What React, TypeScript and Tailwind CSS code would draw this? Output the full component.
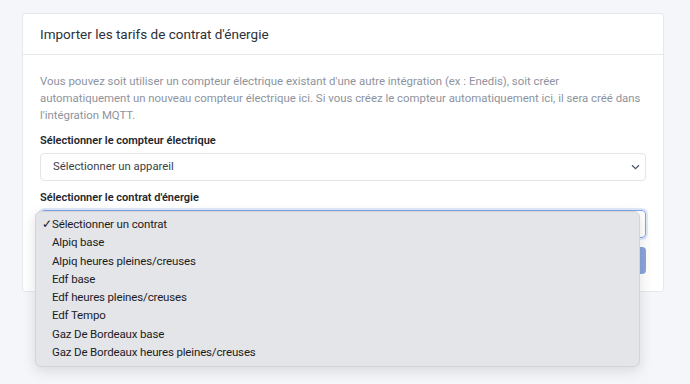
import React from 'react';

const contracts = [
  'Sélectionner un contrat',
  'Alpiq base',
  'Alpiq heures pleines/creuses',
  'Edf base',
  'Edf heures pleines/creuses',
  'Edf Tempo',
  'Gaz De Bordeaux base',
  'Gaz De Bordeaux heures pleines/creuses',
];

const Chevron: React.FC = () => (
  <svg width="9" height="6" viewBox="0 0 9 6" className="text-gray-600">
    <path d="M1 1.2 L4.5 4.6 L8 1.2" fill="none" stroke="currentColor" strokeWidth="1.2" />
  </svg>
);

const App: React.FC = () => {
  return (
    <div
      className="relative h-[384px] w-[690px] overflow-hidden bg-[#f5f6f9] pt-[13px] pl-[22px]"
      style={{ fontFamily: 'Roboto, "Liberation Sans", sans-serif' }}
    >
      <div className="w-[642px] rounded-[3px] border border-[#e6e8ec] bg-white">
        <div className="flex h-[41px] items-center border-b border-[#e6e8ec] px-[17px]">
          <h1 className="text-[13.5px] font-normal text-[#2d3139]">Importer les tarifs de contrat d'énergie</h1>
        </div>
        <div className="px-[17px] pt-[18px] pb-[17px]">
          <p className="text-[11.4px] leading-[17px] text-[#8e939e]">
            <span className="block whitespace-nowrap">
              Vous pouvez soit utiliser un compteur électrique existant d'une autre intégration (ex : Enedis), soit créer
            </span>
            <span className="block whitespace-nowrap">
              automatiquement un nouveau compteur électrique ici. Si vous créez le compteur automatiquement ici, il sera créé dans
            </span>
            <span className="block whitespace-nowrap">l'intégration MQTT.</span>
          </p>
          <label className="mt-[9px] block text-[11px] leading-[16px] font-semibold text-[#23262d]">
            Sélectionner le compteur électrique
          </label>
          <div className="mt-[4px] flex h-[28px] items-center justify-between rounded-[4px] border border-[#e3e5ea] pr-[5px] pl-[12px]">
            <span className="text-[11.3px] text-[#3a3f48]">Sélectionner un appareil</span>
            <Chevron />
          </div>
          <label className="mt-[9px] block text-[11px] leading-[16px] font-semibold text-[#23262d]">
            Sélectionner le contrat d'énergie
          </label>
          <div className="mt-[4px] flex h-[28px] items-center justify-end rounded-[4px] border border-[#7ea6e6] pr-[5px] shadow-[0_0_0_2px_rgba(126,166,230,0.25)]">
            <Chevron />
          </div>
          <div className="mt-[9px] flex justify-end">
            <div className="h-[27px] w-[98px] rounded-[4px] bg-[#8aa5db]" />
          </div>
        </div>
      </div>

      <ul className="absolute top-[211px] left-[35px] w-[605px] rounded-[6px] border border-[#d3d4d8] bg-[#e4e5e9] pt-[3px] pb-[5px] shadow-[0_4px_14px_rgba(0,0,0,0.12)]">
        {contracts.map((c, i) => (
          <li key={c} className="relative h-[18.3px] pl-[16px] text-[11.5px] leading-[18.3px] tracking-[-0.15px] text-[#1c1c1e]">
            {i === 0 && <span className="absolute left-[6px] top-0">✓</span>}
            {c}
          </li>
        ))}
      </ul>
    </div>
  );
};

export default App;
